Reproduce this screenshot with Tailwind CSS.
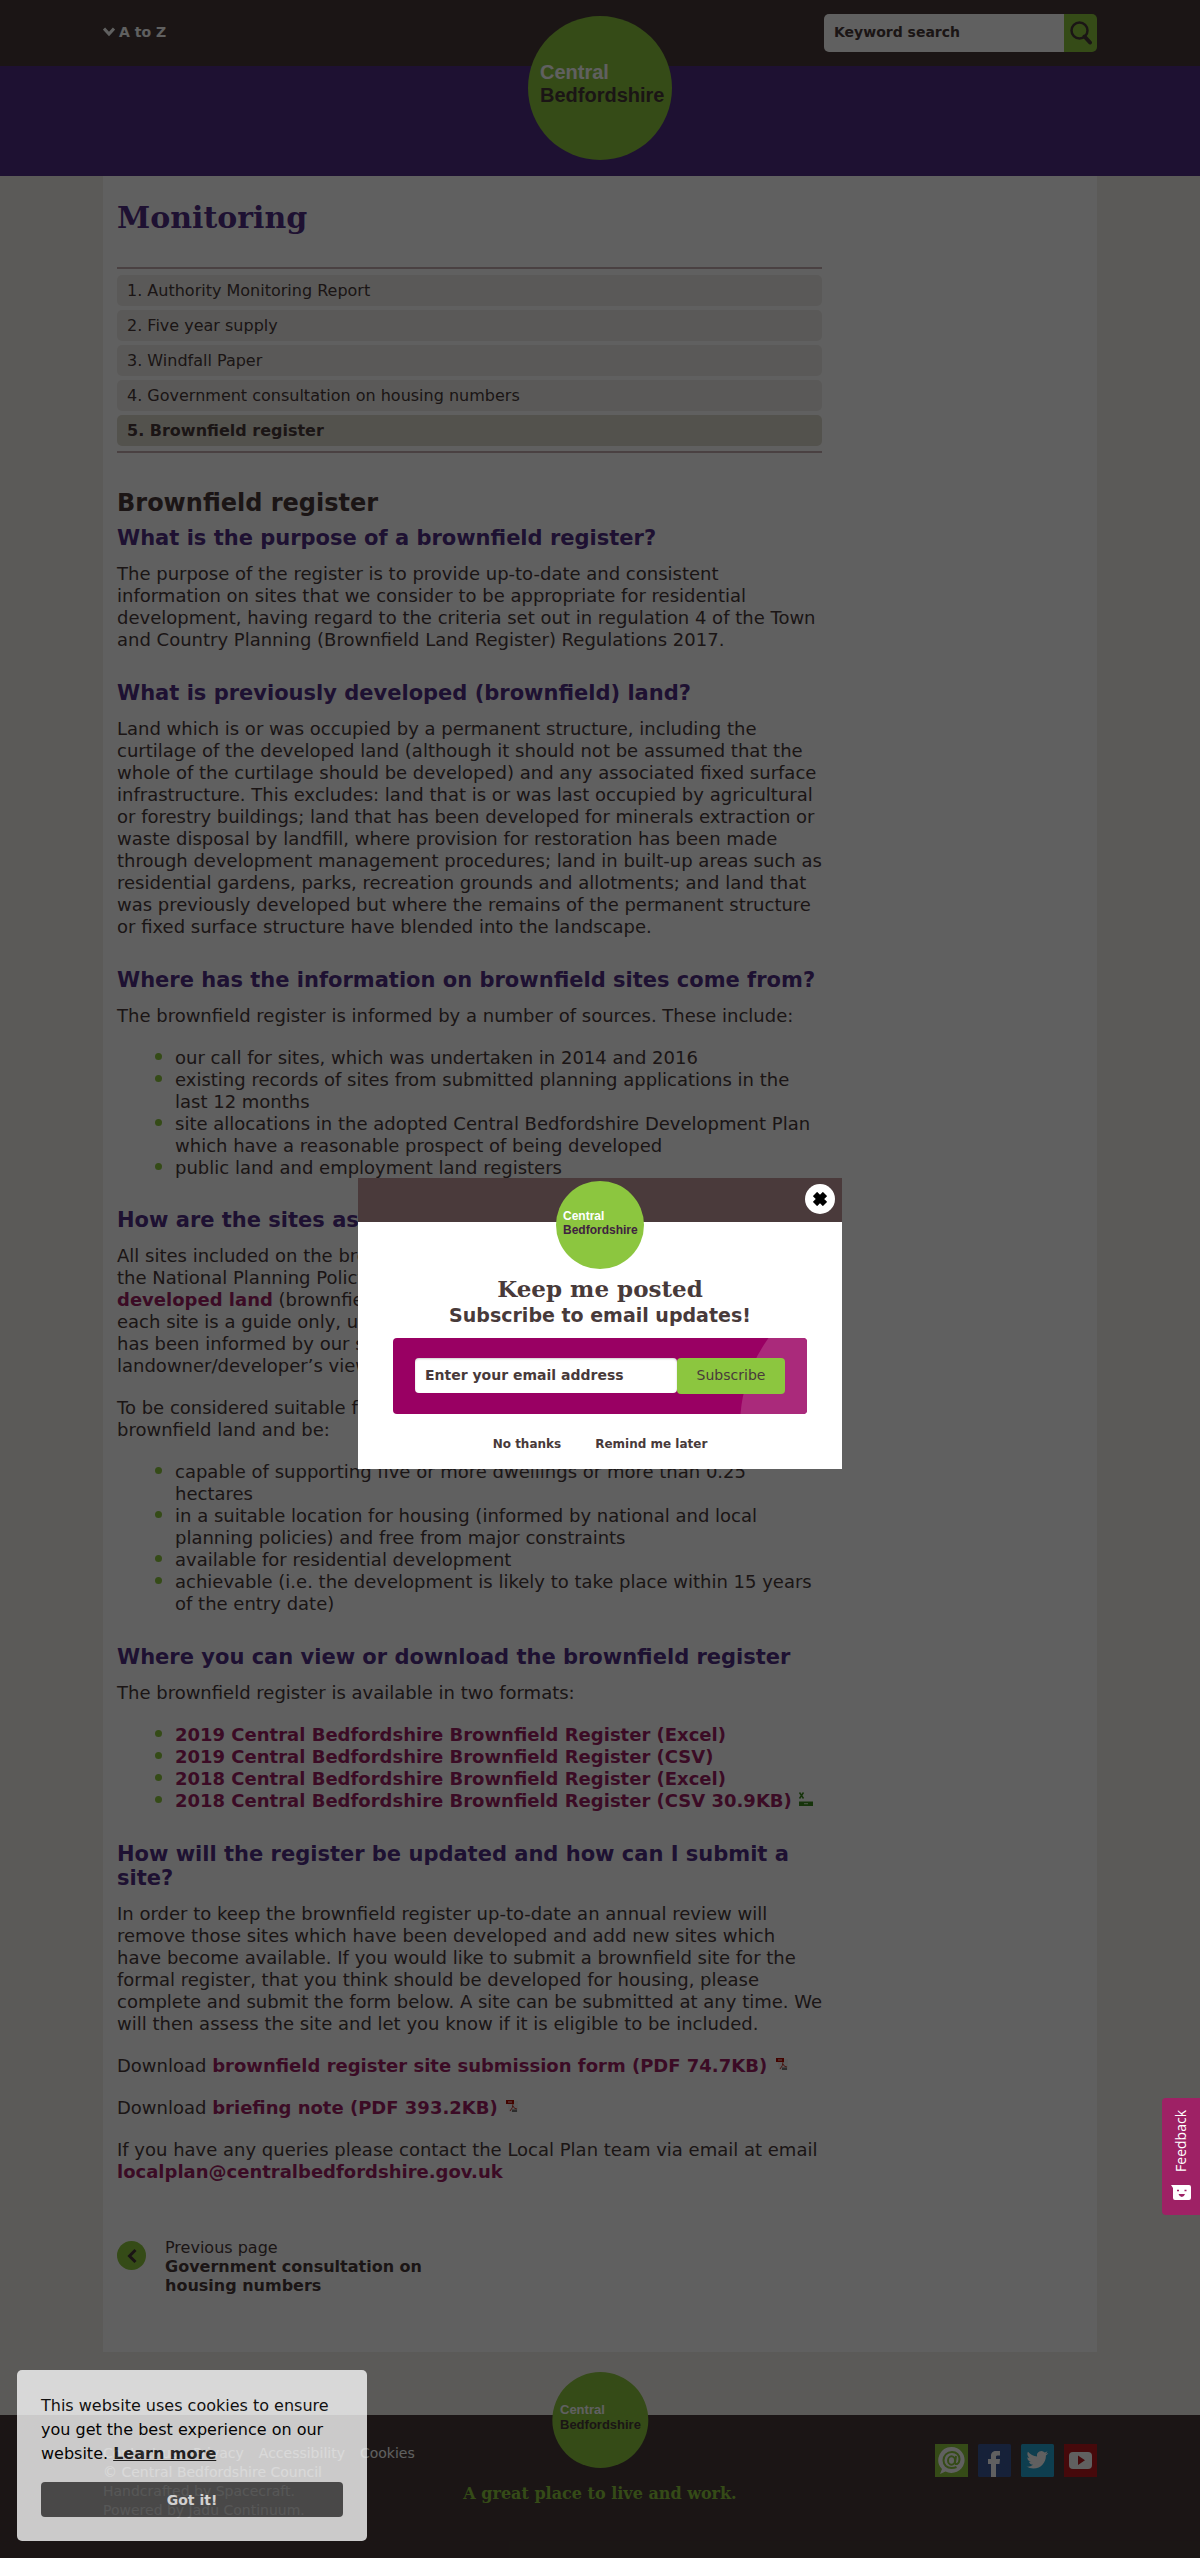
<!DOCTYPE html>
<html lang="en">
<head>
<meta charset="utf-8">
<meta name="viewport" content="width=device-width, initial-scale=1">
<title>Monitoring - Brownfield register | Central Bedfordshire Council</title>
<script src="https://cdn.jsdelivr.net/npm/@tailwindcss/browser@4"></script>
</head>
<body class="bg-[#f2f0e9] font-['DejaVu_Sans',sans-serif] text-[#483a3a]">
<div class="relative overflow-hidden">

  <header>
    <div class="relative bg-[#483a38]">
      <div class="mx-auto flex h-[66px] max-w-[994px] items-start justify-between pt-[14px]">
        <a href="#" class="flex items-center gap-1 pt-[8px] text-sm font-bold text-white">
          <svg class="size-3" viewBox="0 0 12 12" fill="none" stroke="currentColor" stroke-width="3"><path d="M1 2.5 6 8l5-5.500"/></svg>
          A to Z
        </a>
        <form class="flex h-[38px] overflow-hidden rounded-[5px]">
          <input type="search" aria-label="Keyword search" placeholder="Keyword search" class="w-[240px] bg-white px-[10px] pb-[2px] text-sm font-bold placeholder:text-[#483a3a]">
          <button aria-label="Search" class="flex w-[33px] items-center justify-center bg-[#8cc63f] text-[#483a3a]">
            <svg class="h-6 w-[22px]" viewBox="0 0 22 24" fill="none" stroke="currentColor"><circle cx="9.500" cy="9.500" r="8" stroke-width="2.500"/><path d="m14.500 15.500 5.500 6" stroke-width="4" stroke-linecap="round"/></svg>
          </button>
        </form>
      </div>
      <a href="#" aria-label="Central Bedfordshire home" class="absolute top-4 left-1/2 block size-36 -translate-x-1/2 rounded-full bg-[#8cc63f] pt-[45px] pl-[12px] font-['Liberation_Sans',sans-serif] text-xl leading-[23px] font-bold">
        <span class="block text-white">Central</span><span class="block">Bedfordshire</span>
      </a>
    </div>
    <div class="h-[110px] bg-[#512f84]"></div>
  </header>

  <main class="mx-auto max-w-[994px] bg-white px-[14px] pt-[22px] pb-[57px]">
    <div class="max-w-[706px]">
      <h1 class="mb-[29px] font-['DejaVu_Serif',serif] text-[30px] leading-10 font-bold text-[#512f84]">Monitoring</h1>

      <nav aria-label="Pages in this section" class="max-w-[705px] border-y-2 border-[#c4adb0] pt-[6px] pb-[5px]">
        <ol class="flex flex-col gap-1 text-base leading-[31px]">
          <li><a href="#" class="block rounded-[5px] bg-[#efede9] px-[10px]">1. Authority Monitoring Report</a></li>
          <li><a href="#" class="block rounded-[5px] bg-[#efede9] px-[10px]">2. Five year supply</a></li>
          <li><a href="#" class="block rounded-[5px] bg-[#efede9] px-[10px]">3. Windfall Paper</a></li>
          <li><a href="#" class="block rounded-[5px] bg-[#efede9] px-[10px]">4. Government consultation on housing numbers</a></li>
          <li><a href="#" aria-current="page" class="block rounded-[5px] bg-[#ddd9cd] px-[10px] font-bold">5. Brownfield register</a></li>
        </ol>
      </nav>

      <article class="text-lg leading-[22px]">
        <h2 class="mt-9 text-2xl leading-7 font-bold">Brownfield register</h2>
        <h3 class="mt-[9px] mb-[13px] text-[21px] leading-6 font-bold text-[#512f84]">What is the purpose of a brownfield register?</h3>
        <p class="mb-5">The purpose of the register is to provide up-to-date and consistent information on sites that we consider to be appropriate for residential development, having regard to the criteria set out in regulation 4 of the Town and Country Planning (Brownfield Land Register) Regulations 2017.</p>

        <h3 class="mt-[30px] mb-[13px] text-[21px] leading-6 font-bold text-[#512f84]">What is previously developed (brownfield) land?</h3>
        <p class="mb-5">Land which is or was occupied by a permanent structure, including the curtilage of the developed land (although it should not be assumed that the whole of the curtilage should be developed) and any associated fixed surface infrastructure. This excludes: land that is or was last occupied by agricultural or forestry buildings; land that has been developed for minerals extraction or waste disposal by landfill, where provision for restoration has been made through development management procedures; land in built-up areas such as residential gardens, parks, recreation grounds and allotments; and land that was previously developed but where the remains of the permanent structure or fixed surface structure have blended into the landscape.</p>

        <h3 class="mt-[30px] mb-[13px] text-[21px] leading-6 font-bold text-[#512f84]">Where has the information on brownfield sites come from?</h3>
        <p class="mb-5">The brownfield register is informed by a number of sources. These include:</p>
        <ul class="mb-5 pl-[58px]">
          <li class="relative before:absolute before:top-[6px] before:-left-5 before:size-[7px] before:rounded-full before:bg-[#8cc63f]">our call for sites, which was undertaken in 2014 and 2016</li>
          <li class="relative before:absolute before:top-[6px] before:-left-5 before:size-[7px] before:rounded-full before:bg-[#8cc63f]">existing records of sites from submitted planning applications in the last 12 months</li>
          <li class="relative before:absolute before:top-[6px] before:-left-5 before:size-[7px] before:rounded-full before:bg-[#8cc63f]">site allocations in the adopted Central Bedfordshire Development Plan which have a reasonable prospect of being developed</li>
          <li class="relative before:absolute before:top-[6px] before:-left-5 before:size-[7px] before:rounded-full before:bg-[#8cc63f]">public land and employment land registers</li>
        </ul>

        <h3 class="mt-[29px] mb-[13px] text-[21px] leading-6 font-bold text-[#512f84]">How are the sites assessed?</h3>
        <p class="mb-5">All sites included on the brownfield register meet the criteria of<br>the National Planning Policy Framework for previously<br><a href="#" class="font-bold text-[#9e1f63]">developed land</a> (brownfield). The number of dwellings for<br>each site is a guide only, unless there is a permission, and<br>has been informed by our site assessments and the<br>landowner/developer’s views.</p>
        <p class="mb-5">To be considered suitable for the register, sites must be<br>brownfield land and be:</p>
        <ul class="mb-5 pl-[58px]">
          <li class="relative before:absolute before:top-[6px] before:-left-5 before:size-[7px] before:rounded-full before:bg-[#8cc63f]">capable of supporting five or more dwellings or more than 0.25 hectares</li>
          <li class="relative before:absolute before:top-[6px] before:-left-5 before:size-[7px] before:rounded-full before:bg-[#8cc63f]">in a suitable location for housing (informed by national and local planning policies) and free from major constraints</li>
          <li class="relative before:absolute before:top-[6px] before:-left-5 before:size-[7px] before:rounded-full before:bg-[#8cc63f]">available for residential development</li>
          <li class="relative before:absolute before:top-[6px] before:-left-5 before:size-[7px] before:rounded-full before:bg-[#8cc63f]">achievable (i.e. the development is likely to take place within 15 years of the entry date)</li>
        </ul>

        <h3 class="mt-[30px] mb-[13px] text-[21px] leading-6 font-bold text-[#512f84]">Where you can view or download the brownfield register</h3>
        <p class="mb-5">The brownfield register is available in two formats:</p>
        <ul class="mb-5 pl-[58px]">
          <li class="relative before:absolute before:top-[6px] before:-left-5 before:size-[7px] before:rounded-full before:bg-[#8cc63f]"><a href="#" class="font-bold text-[#9e1f63]">2019 Central Bedfordshire Brownfield Register (Excel)</a></li>
          <li class="relative before:absolute before:top-[6px] before:-left-5 before:size-[7px] before:rounded-full before:bg-[#8cc63f]"><a href="#" class="font-bold text-[#9e1f63]">2019 Central Bedfordshire Brownfield Register (CSV)</a></li>
          <li class="relative before:absolute before:top-[6px] before:-left-5 before:size-[7px] before:rounded-full before:bg-[#8cc63f]"><a href="#" class="font-bold text-[#9e1f63]">2018 Central Bedfordshire Brownfield Register (Excel)</a></li>
          <li class="relative before:absolute before:top-[6px] before:-left-5 before:size-[7px] before:rounded-full before:bg-[#8cc63f]"><a href="#" class="font-bold text-[#9e1f63]">2018 Central Bedfordshire Brownfield Register (CSV 30.9KB)</a>
            <svg class="inline-block h-[15px] w-4 align-baseline" viewBox="0 0 16 15"><path fill="#fff" opacity=".4" d="M2 0h13v15H2z"/><path fill="#3c8a1e" d="M1 9.500h14V14H1z"/><path d="m1.500.5 4 6m0-6-4 6" stroke="#3c8a1e" stroke-width="1.500"/><path d="M6 11.700h4" stroke="#cfe8c3"/></svg></li>
        </ul>

        <h3 class="mt-[30px] mb-[13px] text-[21px] leading-6 font-bold text-[#512f84]">How will the register be updated and how can I submit a site?</h3>
        <p class="mb-5">In order to keep the brownfield register up-to-date an annual review will remove those sites which have been developed and add new sites which have become available. If you would like to submit a brownfield site for the formal register, that you think should be developed for housing, please complete and submit the form below. A site can be submitted at any time. We will then assess the site and let you know if it is eligible to be included.</p>
        <p class="mb-5">Download <a href="#" class="font-bold text-[#9e1f63]">brownfield register site submission form (PDF 74.7KB)</a>
          <svg class="ml-[2px] inline-block h-4 w-[14px] align-baseline" viewBox="0 0 14 16"><path fill="#ddd" d="M2 3h11v11H4z" opacity=".35"/><path fill="#b30b00" d="M1 2h8v4H1z"/><path d="M3 4h4" stroke="#fff" stroke-width=".8"/><path d="M8 6q0 4-3 7m3-5q1 3 4 3" stroke="#c23a30" fill="none"/><path fill="#777" d="M7 11.500h5V14H7z"/></svg></p>
        <p class="mb-5">Download <a href="#" class="font-bold text-[#9e1f63]">briefing note (PDF 393.2KB)</a>
          <svg class="ml-[2px] inline-block h-4 w-[14px] align-baseline" viewBox="0 0 14 16"><path fill="#ddd" d="M2 3h11v11H4z" opacity=".35"/><path fill="#b30b00" d="M1 2h8v4H1z"/><path d="M3 4h4" stroke="#fff" stroke-width=".8"/><path d="M8 6q0 4-3 7m3-5q1 3 4 3" stroke="#c23a30" fill="none"/><path fill="#777" d="M7 11.500h5V14H7z"/></svg></p>
        <p>If you have any queries please contact the Local Plan team via email at email <a href="#" class="font-bold text-[#9e1f63]">localplan@centralbedfordshire.gov.uk</a></p>
      </article>

      <a href="#" class="mt-[55px] flex max-w-[330px] items-start gap-[19px] text-base leading-[19px]">
        <span class="mt-[3px] flex size-[29px] shrink-0 items-center justify-center rounded-full bg-[#8cc63f]">
          <svg class="h-[14px] w-[10px]" viewBox="0 0 10 14" fill="none" stroke="currentColor" stroke-width="3"><path d="M8.500 1 2.500 7l6 6"/></svg>
        </span>
        <span><span class="block">Previous page</span><strong class="block">Government consultation on housing numbers</strong></span>
      </a>
    </div>
  </main>

  <footer class="pt-[63px]">
    <div class="relative bg-[#483a38]">
      <div class="mx-auto flex h-[143px] max-w-[994px] items-start justify-between pt-[29px]">
        <div class="text-sm leading-[19px] text-white">
          <ul class="flex gap-[15px]">
            <li><a href="#">Contact us</a></li>
            <li><a href="#">Privacy</a></li>
            <li><a href="#">Accessibility</a></li>
            <li><a href="#">Cookies</a></li>
          </ul>
          <p>© Central Bedfordshire Council</p>
          <p>Handcrafted by Spacecraft.</p>
          <p>Powered by Jadu Continuum.</p>
        </div>
        <ul class="flex gap-[10px]">
          <li><a href="#" aria-label="Email alerts"><svg class="size-[33px]" viewBox="0 0 33 33"><path fill="#8cc63f" d="M0 0h33v33H0z"/><path fill="#fff" d="M16.500 3a13 13 0 1 1-6 24.500L5 30l2-5A13 13 0 0 1 16.500 3z"/><g fill="none" stroke="#8cc63f" stroke-width="2"><ellipse cx="16.500" cy="16.500" rx="3.500" ry="4.200"/><path d="m21 12-1 6.500q0 2 2 1.500 2.500-1 2.500-5c0-4-3-7-7.500-7-5 0-8.500 3.500-8.500 8.300s3.500 7.700 8 7.700q3 0 5-1"/></g></svg></a></li>
          <li><a href="#" aria-label="Facebook"><svg class="size-[33px]" viewBox="0 0 33 33"><rect width="33" height="33" rx="1.500" fill="#3b5998"/><path fill="#fff" d="M13 33V20h-3v-5h3v-3c0-3.500 2-5 5-5h4v4.500h-2.500c-1.500 0-1.500.8-1.500 2V15h4l-.5 5H18v13z"/></svg></a></li>
          <li><a href="#" aria-label="Twitter"><svg class="size-[33px]" viewBox="0 0 33 33"><rect width="33" height="33" rx="1.500" fill="#26a6d1"/><path fill="#fff" transform="translate(5.500 5) scale(.9)" d="M23.953 4.570a10 10 0 0 1-2.825.775 4.958 4.958 0 0 0 2.163-2.723c-.951.555-2.005.959-3.127 1.184a4.920 4.920 0 0 0-8.384 4.482C7.690 8.095 4.067 6.130 1.640 3.162a4.822 4.822 0 0 0-.666 2.475c0 1.710.87 3.213 2.188 4.096a4.904 4.904 0 0 1-2.228-.616v.06a4.923 4.923 0 0 0 3.946 4.827 4.996 4.996 0 0 1-2.212.085 4.936 4.936 0 0 0 4.604 3.417 9.867 9.867 0 0 1-6.102 2.105c-.39 0-.779-.023-1.170-.067a13.995 13.995 0 0 0 7.557 2.209c9.053 0 13.998-7.496 13.998-13.985 0-.21 0-.42-.015-.63A9.935 9.935 0 0 0 24 4.590z"/></svg></a></li>
          <li><a href="#" aria-label="YouTube"><svg class="size-[33px]" viewBox="0 0 33 33"><path fill="#bb1a1e" d="M0 0h33v33H0z"/><rect x="5" y="8" width="23" height="17" rx="4" fill="#fff"/><path fill="#bb1a1e" d="m14 11.500 7 4.700-7 4.800z"/></svg></a></li>
        </ul>
      </div>
      <div class="absolute -top-[43px] left-1/2 flex -translate-x-1/2 flex-col items-center gap-[14px]">
        <a href="#" aria-label="Central Bedfordshire home" class="block size-24 rounded-full bg-[#8cc63f] pt-[30px] pl-[8px] font-['Liberation_Sans',sans-serif] text-[13px] leading-[15px] font-bold">
          <span class="block text-white">Central</span><span class="block">Bedfordshire</span>
        </a>
        <p class="font-['DejaVu_Serif',serif] text-base leading-6 font-bold whitespace-nowrap text-[#8cc63f]">A great place to live and work.</p>
      </div>
    </div>
  </footer>

  <div class="absolute inset-0 bg-black/[0.625]"></div>

  <section role="dialog" aria-label="Keep me posted" class="absolute top-[1178px] left-1/2 w-[484px] -translate-x-1/2 bg-white pb-[12px] text-center">
    <div class="h-11 bg-[#4a3a3b]"></div>
    <div class="absolute top-[3px] left-1/2 size-[88px] -translate-x-1/2 rounded-full bg-[#8cc63f] pt-[28px] pl-[7px] text-left font-['Liberation_Sans',sans-serif] text-xs leading-[14px] font-bold text-[#3f2340]">
      <span class="block text-white">Central</span><span class="block">Bedfordshire</span>
    </div>
    <button aria-label="Close" class="absolute top-[6px] right-[7px] flex size-[30px] items-center justify-center rounded-full bg-white">
      <svg class="size-[14px]" viewBox="0 0 14 14" stroke="#000" stroke-width="6"><path d="m2 2 10 10M12 2 2 12"/></svg>
    </button>
    <h2 class="mt-[53px] font-['DejaVu_Serif',serif] text-[23px] leading-7 font-bold">Keep me posted</h2>
    <p class="text-[19px] leading-6 font-bold">Subscribe to email updates!</p>
    <form class="relative mx-auto mt-[11px] flex h-[76px] w-[414px] overflow-hidden rounded-[4px] bg-[#990063] px-[22px] pt-5">
      <span class="absolute -top-[62px] left-[347px] size-[300px] rounded-full bg-[#aa2a7b]"></span>
      <input type="email" aria-label="Enter your email address" placeholder="Enter your email address" class="relative h-[35px] min-w-0 flex-1 rounded-[4px] bg-white px-[10px] pb-[2px] text-sm font-bold shadow-[inset_0_1px_2px_rgba(0,0,0,0.2)] placeholder:text-[#483a3a]">
      <button class="relative h-9 w-[108px] rounded-[4px] bg-[#8cc63f] pb-[2px] text-sm">Subscribe</button>
    </form>
    <div class="mt-[18px] mb-px flex justify-center gap-[34px] text-xs leading-6 font-bold">
      <a href="#">No thanks</a><a href="#">Remind me later</a>
    </div>
  </section>

  <button class="absolute top-[2098px] right-0 flex h-[117px] w-[38px] flex-col items-center justify-between rounded-l-[4px] bg-[#9e2165] pt-3 pb-[15px] text-white">
    <span class="rotate-180 font-['Open_Sans',sans-serif] text-sm leading-4 [writing-mode:vertical-rl]">Feedback</span>
    <svg class="h-[15px] w-5" viewBox="0 0 20 15"><path fill="#fff" d="M0 0h18q2 0 2 2v11q0 2-2 2H4q-2 0-2-2V3z"/><path d="M6 5.500h2m5.500 0h2" stroke="#9e2165" stroke-width="1.500"/><path fill="#9e2165" d="M7.500 9h6.500q-1 3-3.200 3T7.500 9z"/></svg>
  </button>

  <aside aria-label="Cookie notice" class="absolute bottom-[17px] left-[17px] w-[350px] rounded-[5px] bg-[#f8f8f8] p-6 text-base leading-6 text-black opacity-80">
    <p>This website uses cookies to ensure you get the best experience on our website. <a href="#" class="font-bold text-[#222] underline">Learn more</a></p>
    <button class="mt-[16px] block h-[35px] w-full rounded-[4px] bg-[#555] text-sm font-bold text-white">Got it!</button>
  </aside>
</div>
</body>
</html>
